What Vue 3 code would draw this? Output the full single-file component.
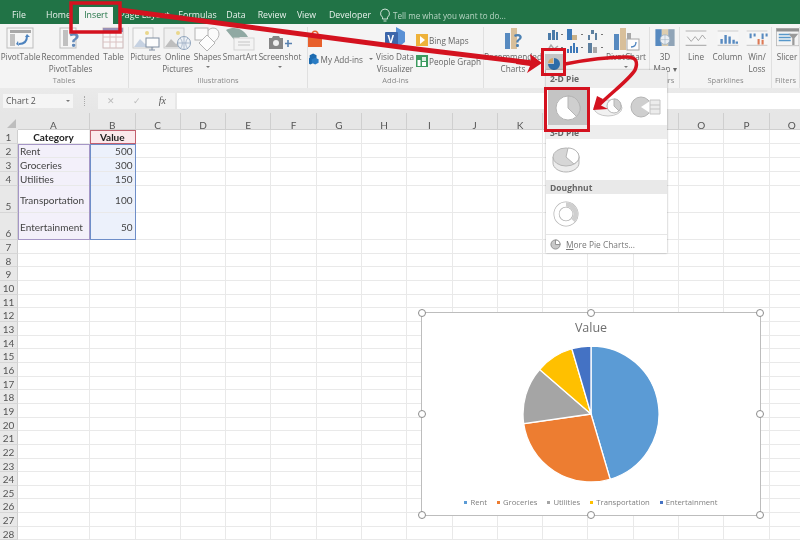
<script setup>
const tabs = [
  { t: 'File', w: 38 }, { t: 'Home', w: 41 }, { t: 'Insert', w: 34, on: true }, { t: 'Page Layout', w: 63 },
  { t: 'Formulas', w: 43 }, { t: 'Data', w: 34 }, { t: 'Review', w: 38 }, { t: 'View', w: 31 }, { t: 'Developer', w: 56 }
]

const I = {
  pivot: '<rect x="2" y="1" width="26" height="20" fill="#f7f7f7" stroke="#b5b5b5"/><rect x="5" y="3" width="21" height="3" fill="#9a9a9a"/><rect x="5" y="7" width="5" height="12" fill="#b8b8b8"/><path d="M22 9c0 5-3 8-8 8" fill="none" stroke="#2f6fb5" stroke-width="2"/><path d="M13 14l-2 3 3 2zM20 10l2-3 3 3z" fill="#2f6fb5"/>',
  rec: '<rect x="2" y="1" width="16" height="20" fill="#f7f7f7" stroke="#b5b5b5"/><rect x="5" y="3" width="5" height="16" fill="#b8b8b8"/>',
  table: '<rect x="5" y="1" width="20" height="20" fill="#fbfbfb" stroke="#c4acac"/><rect x="5" y="1" width="20" height="4" fill="#8a80ad"/><path d="M5 10h20M5 15h20M12 5v16M18 5v16" stroke="#d6baba" stroke-width="1"/>',
  pictures: '<rect x="3" y="1" width="20" height="20" fill="#f8f8f8" stroke="#c4c4c4"/><circle cx="17" cy="6" r="2" fill="#e9d27a"/><path d="M4 20l6-8 5 5 3-2 4 5z" fill="#bfcde0"/><rect x="16" y="11" width="13" height="9" fill="#fff" stroke="#6d7f94"/><path d="M22 20v3M19 23h6" stroke="#6d7f94"/>',
  online: '<rect x="2" y="1" width="20" height="20" fill="#f0f0f0" stroke="#c4c4c4"/><circle cx="16" cy="6" r="2" fill="#e9d27a"/><path d="M3 20l6-8 5 5 3-2 4 5z" fill="#b5b5b5"/><circle cx="22" cy="16" r="6.5" fill="#eef2f7" stroke="#7f97b3"/><path d="M15.5 16h13M22 9.500v13M18 11c3 3 3 8 0 11M26 11c-3 3-3 8 0 11" fill="none" stroke="#7f97b3" stroke-width=".7"/>',
  shapes: '<path d="M15 5c3-6 12-5 12 2 0 5-5 8-8 11l-5-6z" fill="#fdfdfd" stroke="#a9a9a9"/><rect x="3" y="1" width="13" height="12" fill="#fdfdfd" stroke="#a9a9a9"/><path d="M15 8l8 8-8 8-8-8z" fill="#fff" stroke="#a9a9a9"/>',
  smart: '<path d="M2 3c8-4 17-2 22 7h-8l-4 5z" fill="#7f9d95"/><rect x="10" y="11" width="20" height="12" fill="#f3f3f3" stroke="#cfcfcf"/><path d="M14 15h12M14 18h12" stroke="#bdbdbd"/>',
  shot: '<path d="M5 11h3l1-2h6l1 2h3v11H5z" fill="#737373"/><circle cx="12" cy="16" r="3" fill="#f0f0f0"/><path d="M24 13v7M21 16.500h7" stroke="#3d6ea5" stroke-width="1.600"/>',
  store: '<path d="M4 8h14v12H4z" fill="#e8602c"/><path d="M8 8c0-5 6-5 6 0" fill="none" stroke="#e8602c" stroke-width="1.500"/>',
  cubes: '<path d="M6 0l5 2.500v5L6 10 1 7.500v-5z" fill="#1c6bb0"/><path d="M2 6l5 2.500v5L2 16l-2-1V7z" fill="#1c6bb0"/><path d="M9 6l5 2.500v5L9 16l-5-2.500v-5z" fill="#2a7cc4"/>',
  visio: '<path d="M12 0l9 5v10l-9 7z" fill="#3f7fd0"/><rect x="1" y="5" width="13" height="13" rx="1" fill="#1d4e9e"/><text x="3.500" y="15.500" font-size="10" font-weight="700" fill="#fff" font-family="Open Sans, sans-serif">V</text>',
  bing: '<rect width="12" height="12" fill="#eeb23a"/><path d="M4 2l5 4-5 4z" fill="#fff"/>',
  people: '<rect width="12" height="12" fill="#3c9a5f"/><rect x="1.500" y="5" width="3" height="6" fill="#fff"/><rect x="6" y="2" width="4" height="4" fill="#d8efe0"/><rect x="6" y="7" width="4" height="4" fill="#fff"/>',
  recChart: '<rect x="4" y="6" width="5" height="16" fill="#3c78b8"/><rect x="10" y="1" width="6" height="21" fill="#d4b68b"/><text x="13" y="20" font-size="17" font-weight="700" fill="#2f6da8" font-family="Open Sans, sans-serif">?</text>',
  pivotChart: '<rect x="4" y="7" width="5" height="16" fill="#3c78b8"/><rect x="10" y="1" width="6" height="22" fill="#d4b68b"/><rect x="17" y="6" width="4" height="8" fill="#9a9a9a"/><rect x="17" y="12" width="12" height="11" fill="#fff" stroke="#9a9a9a"/><path d="M26 15c0 3-2 5-5 5" fill="none" stroke="#2f6fb5" stroke-width="1.300"/>',
  map: '<rect x="3" y="1" width="8" height="21" fill="#3c78b8"/><rect x="11" y="1" width="8" height="21" fill="#d9c7a3"/><rect x="19" y="1" width="8" height="21" fill="#7f97ad"/><circle cx="15" cy="14" r="6" fill="#e9eef3" stroke="#8fa5b8"/><path d="M9 14h12M15 8v12" stroke="#8fa5b8" stroke-width=".7"/>',
  line: '<rect x="2" y="2" width="26" height="18" fill="#f7f7f7"/><path d="M2 2h26M2 20h26" stroke="#a8a8a8" stroke-width="1.500"/><path d="M4 9l5 6 5-6 4 5 5-7 4 5" fill="none" stroke="#888"/>',
  column: '<rect x="2" y="2" width="26" height="18" fill="#f7f7f7"/><path d="M2 2h26M2 20h26" stroke="#c8c8c8" stroke-width="1.500"/><path d="M7 18v-6M12 18V7M17 18v-9M22 18v-5M26 18v-3" stroke="#3c78b8" stroke-width="3"/>',
  win: '<rect x="2" y="2" width="26" height="18" fill="#f7f7f7"/><path d="M2 2h26M2 20h26" stroke="#c8c8c8" stroke-width="1.500"/><path d="M7 5v6M12 5v4M22 5v7M27 5v4" stroke="#3c78b8" stroke-width="2.600"/><path d="M17 12v7M22 13v6" stroke="#d9643a" stroke-width="2.600"/>',
  slicer: '<rect x="2" y="0" width="30" height="23" fill="#f5f5f5" stroke="#a8a8a8"/><rect x="2" y="0" width="30" height="4" fill="#7f7f7f"/><path d="M5 8h16M5 12h16M5 16h16" stroke="#3c88c4" stroke-width="2.200"/><path d="M18 7h13l-5 6v9h-3v-9z" fill="#8b8b8b"/>'
}

const groups = [
  { name: 'Tables', w: 129, items: [
    { l: 'PivotTable', w: 41, i: I.pivot }, { l: 'Recommended\nPivotTables', w: 59, i: I.rec, q: true }, { l: 'Table', w: 27, i: I.table }
  ] },
  { name: 'Illustrations', w: 179, items: [
    { l: 'Pictures', w: 33, i: I.pictures }, { l: 'Online\nPictures', w: 31, i: I.online }, { l: 'Shapes', w: 29, i: I.shapes, c: true },
    { l: 'SmartArt', w: 36, i: I.smart }, { l: 'Screenshot', w: 44, i: I.shot, c: true }
  ] }
]

const sparks = [
  { l: 'Line', w: 32, i: I.line }, { l: 'Column', w: 31, i: I.column }, { l: 'Win/\nLoss', w: 28, i: I.win }
]

const minis = [
  '<path d="M1 4h3v7H1zM5 1h3v10H5zM9 3h2v8H9z" fill="#4a7aa8"/>',
  '<path d="M0 0h5v11H0z" fill="#3c78b8"/><path d="M5 6h5v5H5z" fill="#c9b188"/>',
  '<path d="M1 6h2v5H1zM4 1h3v4H4zM8 4h2v7H8z" fill="#5c7f9f"/>',
  '<path d="M1 8l3-5 3 4 4-3" fill="none" stroke="#a9a9a9" stroke-width="1.500"/>',
  '<path d="M0 7h2v4H0zM3 4h2v7H3zM6 1h2v10H6zM9 5h2v6H9z" fill="#3c78b8"/>',
  '<path d="M1 1h4v10H1z" fill="#5c7f9f"/><path d="M6 5h4v6H6z" fill="#a9a9a9"/>'
]

const letters = ['A', 'B', 'C', 'D', 'E', 'F', 'G', 'H', 'I', 'J', 'K', 'L', 'M', 'N', 'O', 'P', 'Q']
const data = [
  ['Category', 'Value'], ['Rent', 500], ['Groceries', 300], ['Utilities', 150], ['Transportation', 100], ['Entertainment', 50]
]
const rowNums = Array.from({ length: 28 }, (_, i) => i + 1)

const cell = (r, c) => (data[r - 1] ? data[r - 1][c] ?? '' : '')

const slices = (() => {
  const vals = [500, 300, 150, 100, 50]
  const cols = ['#5b9bd5', '#ed7d31', '#a5a5a5', '#ffc000', '#4472c4']
  const total = vals.reduce((a, b) => a + b, 0)
  let a = 0
  const R = 68
  const C = 70
  return vals.map((v, i) => {
    const b = a + (v / total) * Math.PI * 2
    const p = (t) => `${(C + R * Math.sin(t)).toFixed(2)} ${(C - R * Math.cos(t)).toFixed(2)}`
    const d = `M${C} ${C}L${p(a)}A${R} ${R} 0 ${b - a > Math.PI ? 1 : 0} 1 ${p(b)}Z`
    a = b
    return { d, fill: cols[i] }
  })
})()

const legend = [
  { t: 'Rent', c: '#5b9bd5' }, { t: 'Groceries', c: '#ed7d31' }, { t: 'Utilities', c: '#a5a5a5' },
  { t: 'Transportation', c: '#ffc000' }, { t: 'Entertainment', c: '#4472c4' }
]
const handles = [
  { x: 0, y: 0 }, { x: 50, y: 0 }, { x: 100, y: 0 }, { x: 0, y: 50 },
  { x: 100, y: 50 }, { x: 0, y: 100 }, { x: 50, y: 100 }, { x: 100, y: 100 }
]
</script>

<template>
  <div class="app">
    <header class="tabs">
      <div v-for="t in tabs" :key="t.t" class="tab" :class="{ on: t.on }" :style="{ width: t.w + 'px' }">{{ t.t }}</div>
      <div class="tell">
        <svg width="12" height="15" viewBox="0 0 12 15"><path d="M6 1a4.500 4.500 0 0 0-2.500 8.200V11h5V9.200A4.500 4.500 0 0 0 6 1zM4.500 13h3" fill="none" stroke="#cfe3d7"/></svg>
        <span>Tell me what you want to do...</span>
      </div>
    </header>

    <section class="ribbon">
      <div v-for="g in groups" :key="g.name" class="group" :style="{ width: g.w + 'px' }">
        <div class="items">
          <div v-for="it in g.items" :key="it.l" class="item" :style="{ width: it.w + 'px' }">
            <div class="icon" :class="{ rec: it.q }">
              <svg width="32" height="24" viewBox="0 0 32 24" v-html="it.i"></svg>
              <span v-if="it.q" class="q">?</span>
            </div>
            <div class="lbl">{{ it.l }}</div>
            <i v-if="it.c" class="caret"></i>
          </div>
        </div>
        <div class="gname">{{ g.name }}</div>
      </div>

      <div class="group addins">
        <div class="items">
          <div class="add-left">
            <svg width="22" height="22" viewBox="0 0 22 22" v-html="I.store"></svg>
            <div class="sm my">
              <svg width="14" height="16" viewBox="0 0 14 16" v-html="I.cubes"></svg>
              <span>My Add-ins</span><i class="caret inl"></i>
            </div>
          </div>
          <div class="item visio">
            <div class="icon"><svg width="22" height="22" viewBox="0 0 22 22" v-html="I.visio"></svg></div>
            <div class="lbl">Visio Data<br>Visualizer</div>
          </div>
          <div class="add-right">
            <div class="sm"><svg width="12" height="12" viewBox="0 0 12 12" v-html="I.bing"></svg><span>Bing Maps</span></div>
            <div class="sm"><svg width="12" height="12" viewBox="0 0 12 12" v-html="I.people"></svg><span>People Graph</span></div>
          </div>
        </div>
        <div class="gname">Add-ins</div>
      </div>

      <div class="group charts">
        <div class="items">
          <div class="item rc">
            <div class="icon"><svg width="32" height="24" viewBox="0 0 32 24" v-html="I.recChart"></svg></div>
            <div class="lbl">Recommended<br>Charts</div>
          </div>
          <div class="minis">
            <div v-for="(m, i) in minis" :key="i" class="mini">
              <svg width="12" height="12" viewBox="0 0 12 12" v-html="m"></svg><i class="dash"></i>
            </div>
            <div class="pietile">
              <svg width="14" height="14" viewBox="0 0 14 14"><path d="M7 1a6 6 0 1 1-6 6h6z" fill="#2f6da8"/><path d="M1 6a6 6 0 0 1 5-5v5z" fill="#d3a86a"/></svg>
            </div>
          </div>
          <div class="item pc">
            <div class="icon"><svg width="32" height="24" viewBox="0 0 32 24" v-html="I.pivotChart"></svg></div>
            <div class="lbl">PivotChart</div>
            <i class="caret"></i>
          </div>
        </div>
        <div class="gname">Charts</div>
      </div>

      <div class="group tours">
        <div class="items">
          <div class="item map">
            <div class="icon"><svg width="30" height="24" viewBox="0 0 30 24" v-html="I.map"></svg></div>
            <div class="lbl">3D<br>Map ▾</div>
          </div>
        </div>
        <div class="gname">Tours</div>
      </div>

      <div class="group sparks">
        <div class="items">
          <div v-for="it in sparks" :key="it.l" class="item" :style="{ width: it.w + 'px' }">
            <div class="icon"><svg width="30" height="24" viewBox="0 0 30 24" v-html="it.i"></svg></div>
            <div class="lbl">{{ it.l }}</div>
          </div>
        </div>
        <div class="gname">Sparklines</div>
      </div>

      <div class="group filters">
        <div class="items">
          <div class="item slicer">
            <div class="icon"><svg width="32" height="24" viewBox="0 0 32 24" v-html="I.slicer"></svg></div>
            <div class="lbl">Slicer</div>
          </div>
        </div>
        <div class="gname">Filters</div>
      </div>
    </section>

    <section class="fbar">
      <div class="namebox"><span>Chart 2</span><i class="caret"></i></div>
      <div class="grip"></div>
      <div class="fbtns"><span>✕</span><span>✓</span><em>fx</em></div>
      <div class="finput"></div>
    </section>

    <section class="sheet">
      <div class="gridbox">
        <div class="corner"><i></i></div>
        <div v-for="l in letters" :key="l" class="colh">{{ l }}</div>
        <template v-for="r in rowNums" :key="r">
          <div class="rowh" :class="{ tall: r === 5 || r === 6 }">{{ r }}</div>
          <div
            v-for="(l, c) in letters"
            :key="l"
            class="c"
            :class="{
              head: r === 1 && c < 2,
              num: c === 1 && r > 1,
              a: c === 0 && r > 1 && r < 7,
              b: c === 1 && r > 1 && r < 7,
              p: c === 1 && r === 1
            }"
          >{{ cell(r, c) }}</div>
        </template>
      </div>
      <div class="gridbox over">
        <div class="rng rng-h"></div>
        <div class="rng rng-a"></div>
        <div class="rng rng-b"></div>
      </div>
    </section>

    <section class="chart">
      <div class="ctitle">Value</div>
      <svg class="pie" width="140" height="140" viewBox="0 0 140 140">
        <path v-for="(s, i) in slices" :key="i" :d="s.d" :fill="s.fill" stroke="#fff" stroke-width="1.300" />
      </svg>
      <div class="legend">
        <span v-for="l in legend" :key="l.t"><i :style="{ background: l.c }"></i>{{ l.t }}</span>
      </div>
      <i v-for="(h, i) in handles" :key="i" class="handle" :style="{ left: h.x + '%', top: h.y + '%' }"></i>
    </section>

    <section class="menu">
      <div class="band">2-D Pie</div>
      <div class="mrow r1">
        <div class="tile sel">
          <svg width="28" height="28" viewBox="0 0 28 28"><circle cx="14" cy="14" r="12" fill="#fff" stroke="#b5b5b5"/><path d="M14 14V2a12 12 0 0 1 8.500 20.500z" fill="#cfcfcf" stroke="#b5b5b5"/></svg>
        </div>
        <div class="tile t2">
          <svg width="34" height="26" viewBox="0 0 34 26"><ellipse cx="16" cy="14" rx="14" ry="8" fill="#f1f1f1" stroke="#c8c8c8"/><circle cx="22" cy="12" r="7" fill="#fff" stroke="#b5b5b5"/><path d="M22 12V5a7 7 0 0 1 5 12z" fill="#cfcfcf" stroke="#b5b5b5"/></svg>
        </div>
        <div class="tile t3">
          <svg width="32" height="26" viewBox="0 0 32 26"><circle cx="11" cy="13" r="10" fill="#cfcfcf" stroke="#b5b5b5"/><path d="M11 13l9-6v12z" fill="#fff"/><path d="M20 6h10v14H20zM20 11h10M20 15h10" fill="#ececec" stroke="#c4c4c4"/></svg>
        </div>
      </div>
      <div class="band">3-D Pie</div>
      <div class="mrow r2">
        <div class="tile">
          <svg width="30" height="28" viewBox="0 0 30 28"><path d="M2 11v6c0 5 6 9 13 9s13-4 13-9v-6" fill="#ececec" stroke="#b5b5b5"/><ellipse cx="15" cy="11" rx="13" ry="9" fill="#d6d6d6" stroke="#b5b5b5"/><path d="M15 11l2-9c6 0 11 4 11 9 0 3-2 5-5 7z" fill="#fff" stroke="#b5b5b5"/></svg>
        </div>
      </div>
      <div class="band dark">Doughnut</div>
      <div class="mrow r3">
        <div class="tile">
          <svg width="28" height="28" viewBox="0 0 28 28"><circle cx="14" cy="14" r="9.500" fill="none" stroke="#b5b5b5" stroke-width="6"/><circle cx="14" cy="14" r="9.500" fill="none" stroke="#fff" stroke-width="4.500"/><path d="M14 4.500a9.500 9.500 0 0 1 7 16" fill="none" stroke="#cfcfcf" stroke-width="4.500"/></svg>
        </div>
      </div>
      <div class="mfoot">
        <svg width="11" height="11" viewBox="0 0 12 12"><circle cx="6" cy="6" r="5" fill="#c8c8c8" stroke="#8c8c8c"/><path d="M6 6V1a5 5 0 0 1 5 5z" fill="#fff" stroke="#8c8c8c"/></svg>
        <span><u>M</u>ore Pie Charts...</span>
      </div>
    </section>

    <svg class="marks" width="800" height="541" viewBox="0 0 800 541">
      <g fill="none" stroke="#d4121f">
        <rect x="71" y="3" width="49" height="29" stroke-width="3.500" />
        <rect x="542.500" y="49.500" width="22" height="25" stroke-width="3" />
        <rect x="545.500" y="88.500" width="43" height="42" stroke-width="3" />
        <path d="M120 10L400 47L533 63" stroke-width="5" />
        <path d="M565 64C585 60 610 57 627 57C637 57 638 63 635 70C629 80 612 92 598 106" stroke-width="3.500" />
      </g>
      <path d="M530 54L542 63L527 73L530 66L516 64L517 59L531 61Z" fill="#d4121f" />
      <path d="M597 96L593 110L608 109L600 105L603 99Z" fill="#d4121f" />
    </svg>
  </div>
</template>

<style>
html, body { margin: 0; padding: 0; background: #fff; }
</style>

<style scoped>
.app {
  position: relative;
  width: 800px;
  height: 541px;
  overflow: hidden;
  background: #fff;
  font-family: "Open Sans", "Noto Sans", sans-serif;
  color: #555;
  filter: blur(0.35px);
}
.tabs { display: flex; align-items: flex-end; height: 24px; background: #217346; }
.tab { height: 17px; line-height: 16px; text-align: center; font-size: 8.800px; color: #e8f1ec; white-space: nowrap; }
.tab.on { background: #f4f4f4; color: #217346; }
.tell { display: flex; align-items: center; height: 17px; margin-left: 1px; font-size: 8.100px; color: #b9d6c5; }
.tell span { margin-left: 2px; }

.ribbon {
  display: flex;
  height: 61px;
  padding-top: 3px;
  background: #f4f4f4;
}
.group { display: flex; flex-direction: column; flex: none; box-sizing: border-box; border-right: 1px solid #e0e0e0; overflow: hidden; }
.items { display: flex; flex: 1; min-height: 0; }
.gname { height: 13px; line-height: 11px; text-align: center; font-size: 7.500px; color: #8a8a8a; }
.item { position: relative; display: flex; flex-direction: column; align-items: center; flex: none; }
.icon { position: relative; height: 24px; opacity: .85; }
.icon svg { display: block; }
.icon.rec { margin-left: 6px; }
.q { position: absolute; left: 12px; top: 2px; font-size: 20px; line-height: 22px; font-weight: 700; color: #4a78b0; }
.lbl { white-space: pre-line; text-align: center; font-size: 8.200px; line-height: 11.500px; color: #666; }
.caret { display: block; width: 0; height: 0; border: 2px solid transparent; border-top-color: #777; border-bottom: 0; margin-top: 3px; }
.caret.inl { display: inline-block; margin: 0 0 0 4px; }

.addins { width: 176px; }
.add-left { width: 65px; flex: none; display: flex; flex-direction: column; padding-left: 1px; box-sizing: border-box; }
.add-left > svg { display: block; margin-left: -5px; }
.sm { display: flex; align-items: center; gap: 1px; font-size: 8.200px; color: #666; white-space: nowrap; }
.my { margin-top: 2px; gap: 2px; }
.visio { width: 44px; }
.add-right { display: flex; flex-direction: column; gap: 9px; padding-top: 7px; margin-left: -1px; }

.charts { width: 166px; }
.rc { width: 60px; margin-left: -1px; }
.rc .icon svg { margin-left: 8px; }
.minis {
  display: grid;
  grid-template-columns: repeat(3, 20px);
  grid-auto-rows: 13px;
  align-content: start;
  padding-top: 1px;
  width: 60px;
  flex: none;
}
.mini { display: flex; align-items: center; gap: 2px; margin-left: 4px; }
.dash { width: 2px; height: 1px; background: #777; }
.pietile { display: flex; align-items: center; justify-content: center; width: 18px; height: 20px; margin-left: 2px; background: #c4c4c4; }
.pc { width: 46px; }
.tours { width: 30px; }
.map { width: 30px; }
.map .icon svg { width: 24px; height: 22px; }
.tours .lbl { white-space: nowrap; }
.sparks { width: 92px; }
.sparks .icon svg { width: 24px; height: 20px; margin-top: 2px; }
.filters { flex: 1; min-width: 0; }
.slicer { width: 30px; }
.slicer .icon svg { width: 24px; height: 21px; }

.fbar { display: flex; align-items: center; height: 25px; padding: 2px 0 2px 3px; box-sizing: border-box; background: linear-gradient(#eaeaea, #e6e6e6); }
.namebox { display: flex; align-items: center; justify-content: space-between; box-sizing: border-box; width: 70px; height: 14px; padding: 0 3px; background: #f5f5f5; font-size: 8.800px; color: #555; }
.namebox .caret { margin-top: 0; }
.grip { width: 1px; height: 10px; margin: 0 12px 0 11px; border-left: 1px dotted #aaa; }
.fbtns { display: flex; align-items: center; justify-content: space-around; box-sizing: border-box; width: 77px; height: 16px; background: #f3f3f3; font-size: 9px; color: #bbb; }
.fbtns em { font-family: "Liberation Serif", serif; font-size: 10px; color: #555; }
.finput { flex: 1; height: 16px; margin-left: 2px; background: #fff; }

.sheet { position: relative; }
.gridbox {
  display: grid;
  grid-template-columns: 18px 72px 45.500px repeat(15, 45.300px);
  grid-template-rows: 17px 14px 14px 14px 14px 27px 27px repeat(22, 13.660px);
  background: #fff;
}
.gridbox.over { position: absolute; left: 0; top: 0; background: transparent; pointer-events: none; }
.corner { background: #e6e6e6; position: relative; }
.corner i { position: absolute; right: 2px; bottom: 2px; border-style: solid; border-width: 0 0 9px 9px; border-color: transparent transparent #bdbdbd transparent; }
.colh { background: #e6e6e6; border-right: 1px solid #cfcfcf; border-bottom: 1px solid #cfcfcf; box-sizing: border-box; text-align: center; font-family: Lato, sans-serif; font-size: 10px; line-height: 24px; overflow: hidden; color: #555; }
.rowh { background: #e8e8e8; border-right: 1px solid #cfcfcf; border-bottom: 1px solid #d6d6d6; box-sizing: border-box; text-align: center; font-family: Lato, sans-serif; font-size: 10px; line-height: 15px; color: #555; overflow: hidden; }
.rowh.tall { line-height: 40px; }
.c {
  box-sizing: border-box;
  border-right: 1px solid #e9e9e9;
  border-bottom: 1px solid #e9e9e9;
  padding: 1px 2px 0;
  font-family: Lato, sans-serif;
  font-size: 10px;
  line-height: 12px;
  color: #444;
  display: flex;
  align-items: center;
  white-space: nowrap;
  min-width: 0;
  overflow: hidden;
}
.head { justify-content: center; font-weight: 700; color: #222; }
.num { justify-content: flex-end; }
.a { background: #f3f0fa; }
.b { background: #ecf1fb; }
.p { background: #fbe9ec; }
.rng { box-sizing: border-box; }
.rng-h { grid-column: 3 / 4; grid-row: 2 / 3; border: 1px solid #c2606f; }
.rng-a { grid-column: 2 / 3; grid-row: 3 / 8; border: 1px solid #a596c6; }
.rng-b { grid-column: 3 / 4; grid-row: 3 / 8; border: 1px solid #6e8ec8; }

.chart {
  position: absolute;
  left: 421px;
  top: 312px;
  width: 340px;
  height: 204px;
  box-sizing: border-box;
  border: 1.500px solid #bdbdbd;
  background: #fff;
  display: flex;
  flex-direction: column;
  align-items: center;
}
.ctitle { margin-top: 5px; height: 20px; line-height: 20px; font-size: 12.500px; color: #6f6f6f; }
.pie { display: block; margin-top: 6px; }
.legend { display: flex; gap: 10px; margin-top: 12px; font-size: 7.700px; line-height: 12px; color: #7f7f7f; white-space: nowrap; }
.legend span { display: flex; align-items: center; gap: 3px; }
.legend i { width: 3px; height: 3px; }
.handle { position: absolute; width: 8px; height: 8px; margin: -4.500px 0 0 -4.500px; box-sizing: border-box; border: 1.200px solid #8c8c8c; border-radius: 50%; background: #fff; }

.menu {
  position: absolute;
  left: 546px;
  top: 70px;
  width: 121px;
  height: 183px;
  background: #fff;
  box-shadow: 0 0 2px rgba(0, 0, 0, .35);
  display: flex;
  flex-direction: column;
}
.band { height: 14px; line-height: 15px; padding-left: 4px; background: #ededed; font-size: 8.500px; font-weight: 700; color: #666; flex: none; }
.band:first-child { height: 18px; line-height: 17px; }
.band.dark { background: #e9e9e9; }
.mrow { display: flex; align-items: center; flex: none; }
.r1 { height: 37px; }
.r2 { height: 41px; }
.r3 { height: 40px; border-bottom: 1px solid #e6e6e6; }
.tile { width: 40px; display: flex; justify-content: center; align-items: center; }
.tile.sel { height: 39px; background: #c4c4c4; margin-left: 2px; align-self: flex-start; }
.t2 { width: 40px; margin-left: 1px; }
.t3 { width: 34px; }
.mfoot { display: flex; align-items: center; gap: 5px; padding-left: 4px; flex: 1; font-size: 8.400px; color: #777; }
.marks { position: absolute; left: 0; top: 0; pointer-events: none; }
</style>
